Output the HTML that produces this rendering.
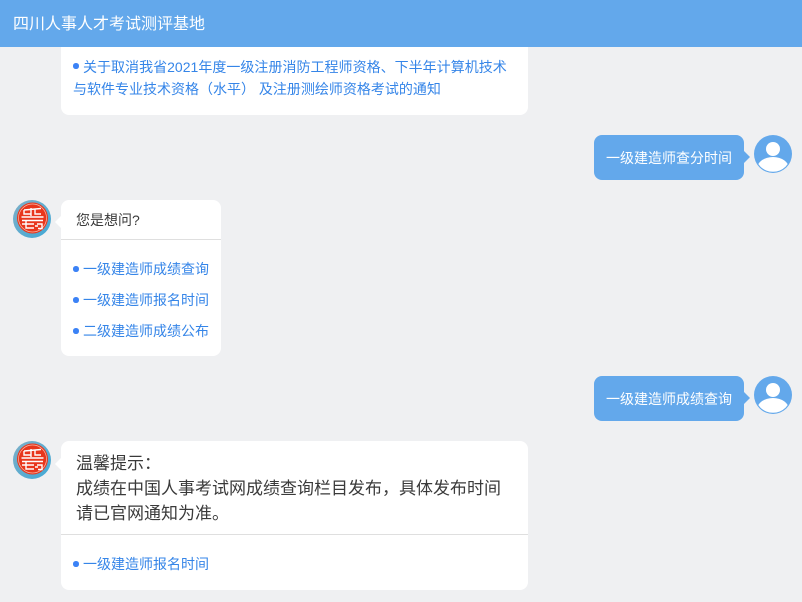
<!DOCTYPE html>
<html lang="zh-CN">
<head>
<meta charset="utf-8">
<title>四川人事人才考试测评基地</title>
<style>
html,body{margin:0;padding:0;}
body{width:802px;height:602px;position:relative;overflow:hidden;background:#eff0f2;font-family:"Liberation Sans","Noto Sans CJK SC",sans-serif;font-size:14px;}
.abs,.t,.card,.bub,.dot,.line,.arr{position:absolute;}
.t{white-space:nowrap;line-height:20px;}
.head{position:absolute;left:0;top:0;width:802px;height:47px;background:#63a8eb;}
.card{background:#fff;border-radius:8px;}
.bub{background:#63a8eb;border-radius:8px;}
.line{height:1px;background:#dfdfdf;}
.dot{width:5.5px;height:5.5px;border-radius:50%;background:#3b82f6;}
.link{color:#3585e8;font-size:14px;}
.dark{color:#3a3a3a;}
.white{color:#fff;}
.arr{width:0;height:0;border-style:solid;}
svg{position:absolute;}
</style>
</head>
<body>
<div class="card" style="left:61px;top:40px;width:467px;height:75px;"></div>
<div class="head"></div>
<div class="t white" style="left:13px;top:13px;font-size:16px;line-height:24px;">四川人事人才考试测评基地</div>

<div class="dot" style="left:73px;top:63px;"></div>
<div class="t link" style="left:83px;top:57px;letter-spacing:.02px;">关于取消我省2021年度一级注册消防工程师资格、下半年计算机技术</div>
<div class="t link" style="left:73px;top:79px;">与软件专业技术资格（水平） 及注册测绘师资格考试的通知</div>

<div class="bub" style="left:594px;top:135px;width:150px;height:45px;"></div>
<div class="arr" style="left:744px;top:151px;border-width:6px 0 6px 6px;border-color:transparent transparent transparent #63a8eb;"></div>
<div class="t white" style="left:606px;top:148px;">一级建造师查分时间</div>
<svg style="left:754px;top:135px;" width="38" height="38" viewBox="0 0 38 38"><defs><clipPath id="c1"><circle cx="19" cy="19" r="17.800"/></clipPath></defs><circle cx="19" cy="19" r="19" fill="#63a8eb"/><circle cx="19" cy="14" r="7" fill="#fff"/><ellipse cx="19" cy="33.500" rx="16" ry="11.500" fill="#fff" clip-path="url(#c1)"/></svg>

<svg style="left:13px;top:200px;" width="38" height="38" viewBox="0 0 38 38"><defs><linearGradient id="g1" x1="0" y1="0" x2="1" y2="1"><stop offset="0" stop-color="#7fb0c8"/><stop offset="1" stop-color="#3fa8d6"/></linearGradient></defs><circle cx="19" cy="19" r="19" fill="url(#g1)"/><circle cx="19.500" cy="18" r="15.500" fill="#e8361c"/><circle cx="19.500" cy="18" r="14" fill="none" stroke="#f7b9a8" stroke-width=".7"/><path d="M11 10l17-1.500M11 10v4h7M18 8v8M22 9.500v4.500h6M8.500 17h22M9 20.500h21M9 24h12M13 20.500v7.500h8M24 24h5v4.500h-4M25 26h-3" fill="none" stroke="#fff" stroke-width="1.400"/></svg>
<div class="arr" style="left:55px;top:216px;border-width:6px 6px 6px 0;border-color:transparent #fff transparent transparent;"></div>
<div class="card" style="left:61px;top:200px;width:160px;height:156px;"></div>
<div class="t dark" style="left:76px;top:210px;">您是想问?</div>
<div class="line" style="left:61px;top:239px;width:160px;"></div>
<div class="dot" style="left:73px;top:266px;"></div>
<div class="t link" style="left:83px;top:259px;">一级建造师成绩查询</div>
<div class="dot" style="left:73px;top:297px;"></div>
<div class="t link" style="left:83px;top:290px;">一级建造师报名时间</div>
<div class="dot" style="left:73px;top:328px;"></div>
<div class="t link" style="left:83px;top:321px;">二级建造师成绩公布</div>

<div class="bub" style="left:594px;top:376px;width:150px;height:45px;"></div>
<div class="arr" style="left:744px;top:392px;border-width:6px 0 6px 6px;border-color:transparent transparent transparent #63a8eb;"></div>
<div class="t white" style="left:606px;top:389px;">一级建造师成绩查询</div>
<svg style="left:754px;top:376px;" width="38" height="38" viewBox="0 0 38 38"><defs><clipPath id="c2"><circle cx="19" cy="19" r="17.800"/></clipPath></defs><circle cx="19" cy="19" r="19" fill="#63a8eb"/><circle cx="19" cy="14" r="7" fill="#fff"/><ellipse cx="19" cy="33.500" rx="16" ry="11.500" fill="#fff" clip-path="url(#c2)"/></svg>

<svg style="left:13px;top:441px;" width="38" height="38" viewBox="0 0 38 38"><defs><linearGradient id="g2" x1="0" y1="0" x2="1" y2="1"><stop offset="0" stop-color="#7fb0c8"/><stop offset="1" stop-color="#3fa8d6"/></linearGradient></defs><circle cx="19" cy="19" r="19" fill="url(#g2)"/><circle cx="19.500" cy="18" r="15.500" fill="#e8361c"/><circle cx="19.500" cy="18" r="14" fill="none" stroke="#f7b9a8" stroke-width=".7"/><path d="M11 10l17-1.500M11 10v4h7M18 8v8M22 9.500v4.500h6M8.500 17h22M9 20.500h21M9 24h12M13 20.500v7.500h8M24 24h5v4.500h-4M25 26h-3" fill="none" stroke="#fff" stroke-width="1.400"/></svg>
<div class="arr" style="left:55px;top:458px;border-width:6px 6px 6px 0;border-color:transparent #fff transparent transparent;"></div>
<div class="card" style="left:61px;top:441px;width:467px;height:149px;"></div>
<div class="t dark" style="left:76px;top:452px;font-size:17px;line-height:24px;">温馨提示：</div>
<div class="t dark" style="left:76px;top:477px;font-size:17px;line-height:24px;">成绩在中国人事考试网成绩查询栏目发布，具体发布时间</div>
<div class="t dark" style="left:76px;top:502px;font-size:17px;line-height:24px;">请已官网通知为准。</div>
<div class="line" style="left:61px;top:534px;width:467px;"></div>
<div class="dot" style="left:73px;top:561px;"></div>
<div class="t link" style="left:83px;top:554px;">一级建造师报名时间</div>
</body>
</html>
